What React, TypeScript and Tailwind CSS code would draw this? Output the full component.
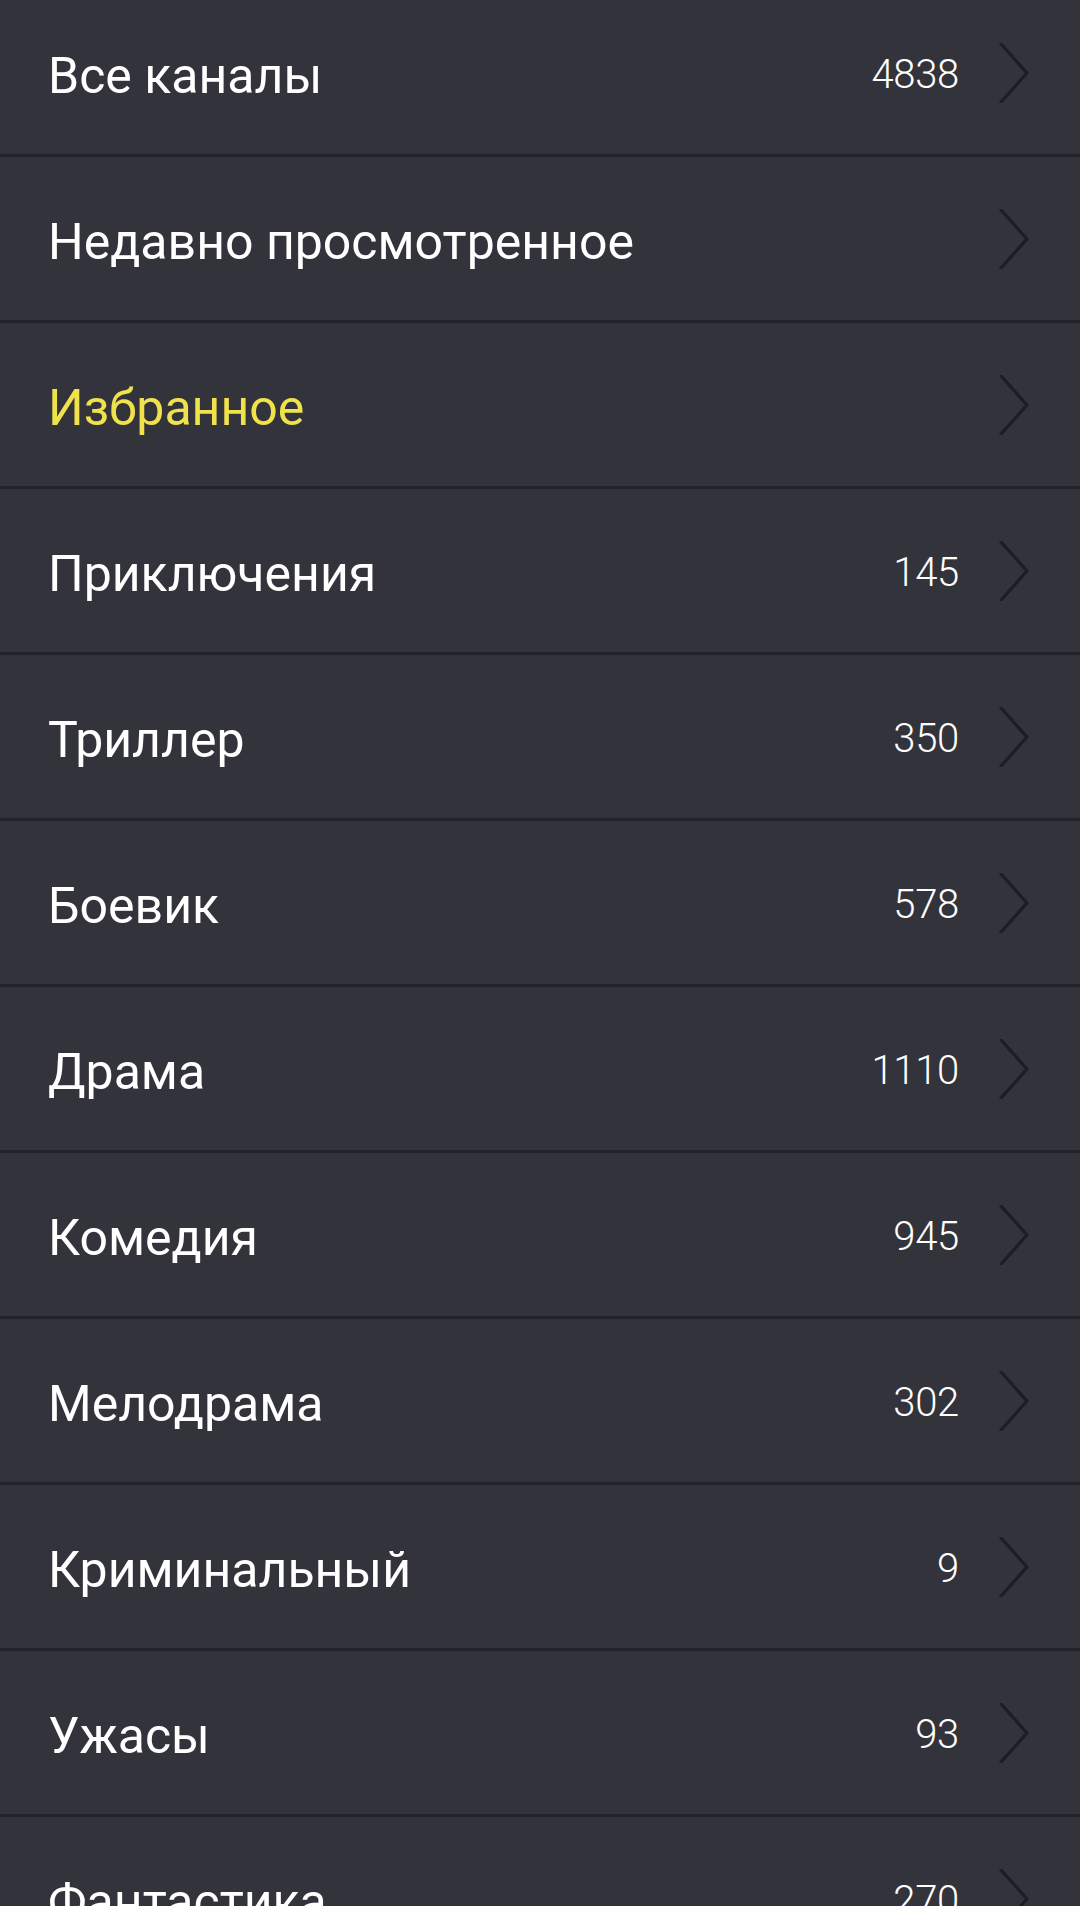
import React from 'react';

interface Category {
  title: string;
  count?: number;
  active?: boolean;
}

const categories: Category[] = [
  { title: 'Все каналы', count: 4838 },
  { title: 'Недавно просмотренное' },
  { title: 'Избранное', active: true },
  { title: 'Приключения', count: 145 },
  { title: 'Триллер', count: 350 },
  { title: 'Боевик', count: 578 },
  { title: 'Драма', count: 1110 },
  { title: 'Комедия', count: 945 },
  { title: 'Мелодрама', count: 302 },
  { title: 'Криминальный', count: 9 },
  { title: 'Ужасы', count: 93 },
  { title: 'Фантастика', count: 270 },
];

const Chevron = () => (
  <svg width="30" height="60" viewBox="0 0 30 60" fill="none" className="shrink-0">
    <polyline
      points="2,1 28,30 2,59"
      stroke="#1d1d25"
      strokeWidth="3.2"
      strokeLinecap="round"
      strokeLinejoin="round"
    />
  </svg>
);

export default function App() {
  return (
    <div className="h-[1906px] w-[1080px] overflow-hidden bg-[#33333c] font-['Roboto',sans-serif]">
      <ul className="-mt-[9px] flex flex-col">
        {categories.map((c) => (
          <li
            key={c.title}
            className="flex h-[166px] items-center border-b-[3px] border-[#22222a] pl-[48px] pr-[51px]"
          >
            <span
              className={`mt-[6px] flex-1 text-[50px] leading-none ${
                c.active ? 'text-[#f0e24a]' : 'text-white'
              }`}
            >
              {c.title}
            </span>
            {c.count !== undefined && (
              <span className="mt-[4px] text-[40px] font-light leading-none tracking-[-0.3px] text-white">
                {c.count}
              </span>
            )}
            <div className="ml-[40px]">
              <Chevron />
            </div>
          </li>
        ))}
      </ul>
    </div>
  );
}
